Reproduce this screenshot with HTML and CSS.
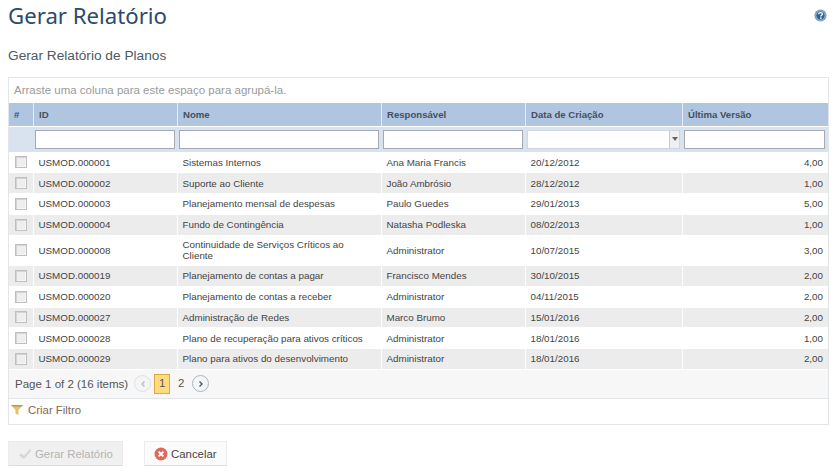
FILE: index.html
```html
<!DOCTYPE html>
<html lang="pt">
<head>
<meta charset="utf-8">
<title>Gerar Relatório</title>
<link rel="stylesheet" href="styles.css">
</head>
<body>
<header class="page-head">
  <h1 class="title">Gerar Relatório</h1>
  <svg class="help" viewBox="0 0 14 14" width="13" height="13"><circle cx="7" cy="7" r="6.5" fill="#6d97c0"/><circle cx="7" cy="7" r="5" fill="#2f6292" stroke="#a9c3dc" stroke-width="1"/><path d="M5 5.6C5 4.4 6 3.8 7.1 3.8 8.3 3.8 9.1 4.5 9.1 5.5 9.1 6.8 7.3 6.9 7.3 8.2" fill="none" stroke="#fff" stroke-width="1.4"/><rect x="6.5" y="9" width="1.6" height="1.5" fill="#fff"/></svg>
</header>
<h2 class="subtitle">Gerar Relatório de Planos</h2>
<section class="grid">
  <div class="group-panel">Arraste uma coluna para este espaço para agrupá-la.</div>
  <table class="data">
    <colgroup>
      <col class="c0"><col class="c1"><col class="c2"><col class="c3"><col class="c4"><col class="c5">
    </colgroup>
    <thead>
      <tr class="head">
        <th class="hash">#</th><th>ID</th><th>Nome</th><th>Responsável</th><th>Data de Criação</th><th>Última Versão</th>
      </tr>
      <tr class="filter">
        <td></td>
        <td><input class="box" type="text"></td>
        <td><input class="box" type="text"></td>
        <td><input class="box" type="text"></td>
        <td><div class="combo"><span class="combo-btn"><i class="arrow"></i></span></div></td>
        <td class="last"><input class="box" type="text"></td>
      </tr>
    </thead>
    <tbody>
      <tr><td class="chk"><span class="cb"></span></td><td>USMOD.000001</td><td>Sistemas Internos</td><td>Ana Maria Francis</td><td>20/12/2012</td><td class="num">4,00</td></tr>
      <tr class="alt"><td class="chk"><span class="cb"></span></td><td>USMOD.000002</td><td>Suporte ao Cliente</td><td>João Ambrósio</td><td>28/12/2012</td><td class="num">1,00</td></tr>
      <tr><td class="chk"><span class="cb"></span></td><td>USMOD.000003</td><td>Planejamento mensal de despesas</td><td>Paulo Guedes</td><td>29/01/2013</td><td class="num">5,00</td></tr>
      <tr class="alt"><td class="chk"><span class="cb"></span></td><td>USMOD.000004</td><td>Fundo de Contingência</td><td>Natasha Podleska</td><td>08/02/2013</td><td class="num">1,00</td></tr>
      <tr class="tall"><td class="chk"><span class="cb"></span></td><td>USMOD.000008</td><td>Continuidade de Serviços Críticos ao Cliente</td><td>Administrator</td><td>10/07/2015</td><td class="num">3,00</td></tr>
      <tr class="alt"><td class="chk"><span class="cb"></span></td><td>USMOD.000019</td><td>Planejamento de contas a pagar</td><td>Francisco Mendes</td><td>30/10/2015</td><td class="num">2,00</td></tr>
      <tr><td class="chk"><span class="cb"></span></td><td>USMOD.000020</td><td>Planejamento de contas a receber</td><td>Administrator</td><td>04/11/2015</td><td class="num">2,00</td></tr>
      <tr class="alt"><td class="chk"><span class="cb"></span></td><td>USMOD.000027</td><td>Administração de Redes</td><td>Marco Brumo</td><td>15/01/2016</td><td class="num">2,00</td></tr>
      <tr><td class="chk"><span class="cb"></span></td><td>USMOD.000028</td><td>Plano de recuperação para ativos críticos</td><td>Administrator</td><td>18/01/2016</td><td class="num">1,00</td></tr>
      <tr class="alt"><td class="chk"><span class="cb"></span></td><td>USMOD.000029</td><td>Plano para ativos do desenvolvimento</td><td>Administrator</td><td>18/01/2016</td><td class="num">2,00</td></tr>
    </tbody>
  </table>
  <div class="pager">
    <span class="pager-info">Page 1 of 2 (16 items)</span>
    <span class="nav off"><svg viewBox="0 0 8 8" width="8" height="8"><path d="M5.5 1.5 3 4l2.5 2.5" fill="none" stroke="currentColor" stroke-width="1.4"/></svg></span>
    <span class="page current">1</span>
    <span class="page">2</span>
    <span class="nav"><svg viewBox="0 0 8 8" width="8" height="8"><path d="M2.5 1.5 5 4 2.5 6.5" fill="none" stroke="currentColor" stroke-width="1.4"/></svg></span>
  </div>
  <div class="filter-bar">
    <svg class="funnel" viewBox="0 0 12 10" width="12" height="10"><path d="M0 0h12L7.5 5V10L4.5 8.5V5z" fill="#e3c26f"/><path d="M0 0h12L10.6 1.5H1.4z" fill="#b79a55"/></svg>
    <span>Criar Filtro</span>
  </div>
</section>
<footer class="actions">
  <button class="btn disabled" type="button">
    <svg viewBox="0 0 14 12" width="14" height="12"><path d="M1 7.5l2-2 3 2.2L12 1l1.4 1.4L6 11z" fill="#d6d6d6"/></svg>
    <span>Gerar Relatório</span>
  </button>
  <button class="btn cancel" type="button">
    <svg viewBox="0 0 14 14" width="14" height="14"><circle cx="7" cy="7" r="6.5" fill="#de6a5e"/><path d="M4.6 4.6l4.8 4.8M9.4 4.6l-4.8 4.8" stroke="#fff" stroke-width="2"/></svg>
    <span>Cancelar</span>
  </button>
</footer>
</body>
</html>
```
FILE: styles.css
```css
* { box-sizing: border-box; }
html, body { height: 100%; }
body {
  margin: 0;
  padding: 0 5px 0 8px;
  background: #fff;
  font-family: "Liberation Sans", Arial, sans-serif;
  font-size: 9.8px;
  color: #444;
  overflow: hidden;
}
.page-head {
  display: flex;
  justify-content: space-between;
  align-items: flex-start;
  height: 46px;
}
.title {
  margin: 0;
  padding-top: 1px;
  font-family: "Noto Sans", sans-serif;
  font-size: 22.2px;
  line-height: 30px;
  font-weight: 400;
  color: #2c4a6b;
}
.help { margin: 9px 2px 0 0; }
.subtitle {
  margin: 0;
  height: 31px;
  padding-top: 1px;
  font-size: 13.7px;
  line-height: 18px;
  font-weight: 400;
  color: #4a5a6a;
}
.grid {
  width: 821px;
  height: 348px;
  border: 1px solid #e3e6e9;
  display: flex;
  flex-direction: column;
}
.group-panel {
  height: 25px;
  padding-left: 5px;
  font-size: 11.5px;
  line-height: 24px;
  color: #9a9a9a;
}
.data {
  width: 100%;
  table-layout: fixed;
  border-collapse: collapse;
}
.c0 { width: 24px; }
.c1 { width: 144px; }
.c2 { width: 204px; }
.c3 { width: 144px; }
.c4 { width: 157px; }
.head th {
  height: 23px;
  padding: 1px 6px 0 5px;
  background: #afc5e0;
  border-left: 1px solid #e6edf5;
  border-bottom: 1px solid #fff;
  font-size: 9.6px;
  font-weight: 700;
  text-align: left;
  color: #44505e;
}
.head th + th { padding-left: 5.5px; }
.head th.hash { border-left: 0; }
.filter td {
  height: 26px;
  padding: 0 2px 0 1.5px;
  background: #d8e3ef;
}
.filter td.last { padding-right: 3px; }
.box, .combo {
  display: block;
  width: 100%;
  height: 19px;
  margin: 0;
  padding: 0;
  border: 1px solid #a5aab0;
  background: #fff;
}
.combo { display: flex; justify-content: flex-end; border-color: #d0d6dc; }
.combo-btn {
  width: 10px;
  border-left: 1px solid #c5c9cd;
  background: #eef0f2;
  display: flex;
  align-items: center;
  justify-content: center;
}
.arrow {
  width: 0; height: 0;
  border-left: 3px solid transparent;
  border-right: 3px solid transparent;
  border-top: 4px solid #666;
}
tbody td {
  height: 20.75px;
  padding: 0 5px 0 5px;
  border-bottom: 1px solid #fff;
  border-left: 1px solid #fff;
  font-size: 9.8px;
  line-height: 11px;
  color: #444;
}
tbody td:nth-child(3) { padding-right: 14px; }
tbody .tall td { height: 30.5px; }
tbody .alt td { background: #ececec; }
tbody td.chk { padding: 0 0 0 6px; border-left: 0; }
.cb {
  display: block;
  width: 12px;
  height: 12px;
  border: 1px solid #bfbfbf;
  box-shadow: inset 1px 1px 0 #d4d4d4, inset -1px -1px 0 #f6f6f6;
  background: #eeeeee;
}
.num { text-align: right; }
.pager {
  display: flex;
  align-items: center;
  height: 29px;
  padding-left: 6px;
  background: #f7f7f7;
  border-bottom: 1px solid #e3e6e9;
  font-size: 11.5px;
  color: #555;
}
.pager-info { margin-right: 6px; }
.nav {
  width: 17px;
  height: 17px;
  border: 1px solid #aab4be;
  border-radius: 50%;
  background: #f3f5f7;
  display: flex;
  align-items: center;
  justify-content: center;
  color: #44596e;
}
.nav.off { border-color: #dde0e3; color: #bbb; }
.page {
  width: 16px;
  height: 20px;
  margin-left: 3px;
  line-height: 19px;
  text-align: center;
}
.page.current {
  background: #fedb7c;
  border: 1px solid #d9a94a;
  line-height: 17px;
}
.page + .nav { margin-left: 3px; }
.filter-bar {
  flex: 1;
  display: flex;
  align-items: center;
  gap: 5px;
  padding: 0 0 2px 2px;
  font-size: 11.4px;
  color: #7d6a55;
}
.actions {
  display: flex;
  gap: 21px;
  margin-top: 16px;
}
.btn {
  display: flex;
  align-items: center;
  gap: 3px;
  height: 25px;
  padding: 0 9px;
  font: 11.4px "Liberation Sans", Arial, sans-serif;
  white-space: nowrap;
  color: #444;
  background: #fbfbfb;
  border: 1px solid #ececec;
  border-bottom-color: #ddd;
}
.btn.disabled { background: #f0f0f0; color: #b4b4b4; width: 115px; }
.btn.cancel { width: 83px; }
```
